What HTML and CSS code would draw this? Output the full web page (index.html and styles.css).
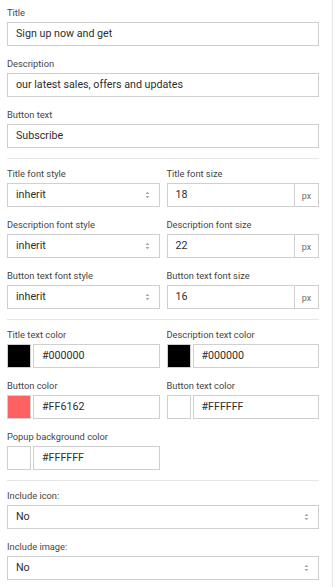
FILE: index.html
```html
<!DOCTYPE html>
<html>
<head>
<meta charset="utf-8">
<link rel="stylesheet" href="styles.css">
</head>
<body>
<div class="panel">
  <div class="section">
    <div class="field">
      <div class="label">Title</div>
      <div class="box"><span class="val">Sign up now and get</span></div>
    </div>
    <div class="field">
      <div class="label">Description</div>
      <div class="box"><span class="val">our latest sales, offers and updates</span></div>
    </div>
    <div class="field">
      <div class="label">Button text</div>
      <div class="box"><span class="val">Subscribe</span></div>
    </div>
  </div>
  <div class="sep"></div>
  <div class="section">
    <div class="row">
      <div class="field">
        <div class="label">Title font style</div>
        <div class="box select"><span class="val">inherit</span><svg class="arrow" width="5" height="8" viewBox="0 0 5 8"><path d="M0.5 3 L2.5 0.8 L4.5 3 Z M0.5 5 L2.5 7.2 L4.5 5 Z" fill="#a8a8a8"/></svg></div>
      </div>
      <div class="field">
        <div class="label">Title font size</div>
        <div class="box group"><span class="val">18</span><span class="addon">px</span></div>
      </div>
    </div>
    <div class="row">
      <div class="field">
        <div class="label">Description font style</div>
        <div class="box select"><span class="val">inherit</span><svg class="arrow" width="5" height="8" viewBox="0 0 5 8"><path d="M0.5 3 L2.5 0.8 L4.5 3 Z M0.5 5 L2.5 7.2 L4.5 5 Z" fill="#a8a8a8"/></svg></div>
      </div>
      <div class="field">
        <div class="label">Description font size</div>
        <div class="box group"><span class="val">22</span><span class="addon">px</span></div>
      </div>
    </div>
    <div class="row">
      <div class="field">
        <div class="label">Button text font style</div>
        <div class="box select"><span class="val">inherit</span><svg class="arrow" width="5" height="8" viewBox="0 0 5 8"><path d="M0.5 3 L2.5 0.8 L4.5 3 Z M0.5 5 L2.5 7.2 L4.5 5 Z" fill="#a8a8a8"/></svg></div>
      </div>
      <div class="field">
        <div class="label">Button text font size</div>
        <div class="box group"><span class="val">16</span><span class="addon">px</span></div>
      </div>
    </div>
  </div>
  <div class="sep"></div>
  <div class="section">
    <div class="row">
      <div class="field">
        <div class="label">Title text color</div>
        <div class="color"><span class="swatch sw-black"></span><div class="box hex"><span class="val">#000000</span></div></div>
      </div>
      <div class="field">
        <div class="label">Description text color</div>
        <div class="color"><span class="swatch sw-black"></span><div class="box hex"><span class="val">#000000</span></div></div>
      </div>
    </div>
    <div class="row">
      <div class="field">
        <div class="label">Button color</div>
        <div class="color"><span class="swatch sw-coral"></span><div class="box hex"><span class="val">#FF6162</span></div></div>
      </div>
      <div class="field">
        <div class="label">Button text color</div>
        <div class="color"><span class="swatch sw-white"></span><div class="box hex"><span class="val">#FFFFFF</span></div></div>
      </div>
    </div>
    <div class="row">
      <div class="field">
        <div class="label">Popup background color</div>
        <div class="color"><span class="swatch sw-white"></span><div class="box hex"><span class="val">#FFFFFF</span></div></div>
      </div>
      <div class="field"></div>
    </div>
  </div>
  <div class="sep"></div>
  <div class="section">
    <div class="field">
      <div class="label">Include icon:</div>
      <div class="box select"><span class="val">No</span><svg class="arrow" width="5" height="8" viewBox="0 0 5 8"><path d="M0.5 3 L2.5 0.8 L4.5 3 Z M0.5 5 L2.5 7.2 L4.5 5 Z" fill="#a8a8a8"/></svg></div>
    </div>
    <div class="field">
      <div class="label">Include image:</div>
      <div class="box select"><span class="val">No</span><svg class="arrow" width="5" height="8" viewBox="0 0 5 8"><path d="M0.5 3 L2.5 0.8 L4.5 3 Z M0.5 5 L2.5 7.2 L4.5 5 Z" fill="#a8a8a8"/></svg></div>
    </div>
  </div>
</div>
</body>
</html>
```

FILE: styles.css
```css
html, body {
  margin: 0;
  padding: 0;
  background: #ffffff;
}

body {
  font-family: Roboto, "Liberation Sans", sans-serif;
}

.panel {
  width: 333px;
  min-height: 587px;
  box-sizing: border-box;
  border-right: 1px solid #e6e6e6;
  padding: 7px 13px 0 7px;
}

.section {
  display: flex;
  flex-direction: column;
  gap: 12px;
}

.row {
  display: grid;
  grid-template-columns: 1fr 1fr;
  column-gap: 7px;
}

.field {
  display: flex;
  flex-direction: column;
  min-width: 0;
}

.label {
  font-size: 9.3px;
  line-height: 12px;
  color: #454545;
  margin-bottom: 3px;
  white-space: nowrap;
}

.box {
  height: 24px;
  box-sizing: border-box;
  border: 1px solid #cfcfcf;
  display: flex;
  align-items: center;
  padding-left: 8px;
  background: #fff;
}

.val {
  font-size: 10.7px;
  line-height: 22px;
  color: #2e2e2e;
  white-space: nowrap;
}

.select {
  padding-right: 9px;
}

.arrow {
  margin-left: auto;
  flex: none;
}

.group {
  padding-right: 0;
}

.addon {
  margin-left: auto;
  width: 24px;
  align-self: stretch;
  border-left: 1px solid #cfcfcf;
  font-size: 9px;
  line-height: 22px;
  padding-top: 1px;
  box-sizing: border-box;
  text-align: center;
  color: #6f6f6f;
}

.color {
  display: flex;
  gap: 2px;
}

.swatch {
  width: 24px;
  height: 24px;
  box-sizing: border-box;
  border: 1px solid #cfcfcf;
  flex: none;
}

.sw-black { background: #000000; }
.sw-coral { background: #ff6162; }
.sw-white { background: #ffffff; }

.hex {
  flex: 1;
  min-width: 0;
}

.sep {
  height: 1px;
  background: #e6e6e6;
  margin: 10px 0 9px;
}
```
